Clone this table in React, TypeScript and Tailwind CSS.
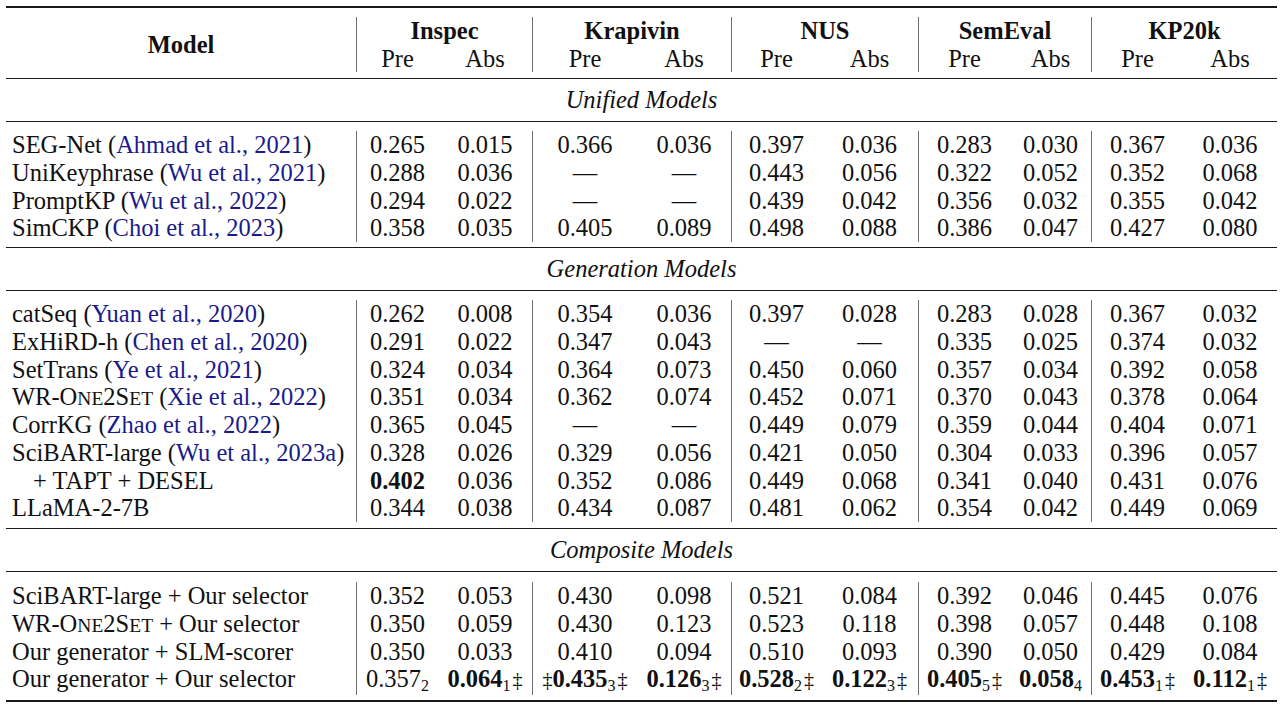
import type { ReactNode } from 'react';
import clsx from 'clsx';

type Cell = string | { v: string; b?: boolean; sub?: string; pre?: string; post?: string };

type Row = { name: ReactNode; cite?: string; indent?: boolean; vals: Cell[] };

const grid =
  'grid grid-cols-[350px_82px_94px_105px_94px_90px_97px_92px_81px_92px_94px]';

// small caps, sized like LaTeX \textsc
const One2Set = () => (
  <>
    WR-O<span className="text-[19.5px]">NE</span>2S<span className="text-[19.5px]">ET</span>
  </>
);

const unified: Row[] = [
  { name: 'SEG-Net', cite: 'Ahmad et al., 2021', vals: ['0.265', '0.015', '0.366', '0.036', '0.397', '0.036', '0.283', '0.030', '0.367', '0.036'] },
  { name: 'UniKeyphrase', cite: 'Wu et al., 2021', vals: ['0.288', '0.036', '—', '—', '0.443', '0.056', '0.322', '0.052', '0.352', '0.068'] },
  { name: 'PromptKP', cite: 'Wu et al., 2022', vals: ['0.294', '0.022', '—', '—', '0.439', '0.042', '0.356', '0.032', '0.355', '0.042'] },
  { name: 'SimCKP', cite: 'Choi et al., 2023', vals: ['0.358', '0.035', '0.405', '0.089', '0.498', '0.088', '0.386', '0.047', '0.427', '0.080'] },
];

const generation: Row[] = [
  { name: 'catSeq', cite: 'Yuan et al., 2020', vals: ['0.262', '0.008', '0.354', '0.036', '0.397', '0.028', '0.283', '0.028', '0.367', '0.032'] },
  { name: 'ExHiRD-h', cite: 'Chen et al., 2020', vals: ['0.291', '0.022', '0.347', '0.043', '—', '—', '0.335', '0.025', '0.374', '0.032'] },
  { name: 'SetTrans', cite: 'Ye et al., 2021', vals: ['0.324', '0.034', '0.364', '0.073', '0.450', '0.060', '0.357', '0.034', '0.392', '0.058'] },
  { name: <One2Set />, cite: 'Xie et al., 2022', vals: ['0.351', '0.034', '0.362', '0.074', '0.452', '0.071', '0.370', '0.043', '0.378', '0.064'] },
  { name: 'CorrKG', cite: 'Zhao et al., 2022', vals: ['0.365', '0.045', '—', '—', '0.449', '0.079', '0.359', '0.044', '0.404', '0.071'] },
  { name: 'SciBART-large', cite: 'Wu et al., 2023a', vals: ['0.328', '0.026', '0.329', '0.056', '0.421', '0.050', '0.304', '0.033', '0.396', '0.057'] },
  { name: '+ TAPT + DESEL', indent: true, vals: [{ v: '0.402', b: true }, '0.036', '0.352', '0.086', '0.449', '0.068', '0.341', '0.040', '0.431', '0.076'] },
  { name: 'LLaMA-2-7B', vals: ['0.344', '0.038', '0.434', '0.087', '0.481', '0.062', '0.354', '0.042', '0.449', '0.069'] },
];

const composite: Row[] = [
  { name: 'SciBART-large + Our selector', vals: ['0.352', '0.053', '0.430', '0.098', '0.521', '0.084', '0.392', '0.046', '0.445', '0.076'] },
  { name: <><One2Set /> + Our selector</>, vals: ['0.350', '0.059', '0.430', '0.123', '0.523', '0.118', '0.398', '0.057', '0.448', '0.108'] },
  { name: 'Our generator + SLM-scorer', vals: ['0.350', '0.033', '0.410', '0.094', '0.510', '0.093', '0.390', '0.050', '0.429', '0.084'] },
  {
    name: 'Our generator + Our selector',
    vals: [
      { v: '0.357', sub: '2' },
      { v: '0.064', b: true, sub: '1', post: '‡' },
      { v: '0.435', b: true, sub: '3', pre: '‡', post: '‡' },
      { v: '0.126', b: true, sub: '3', post: '‡' },
      { v: '0.528', b: true, sub: '2', post: '‡' },
      { v: '0.122', b: true, sub: '3', post: '‡' },
      { v: '0.405', b: true, sub: '5', post: '‡' },
      { v: '0.058', b: true, sub: '4' },
      { v: '0.453', b: true, sub: '1', post: '‡' },
      { v: '0.112', b: true, sub: '1', post: '‡' },
    ],
  },
];

function renderCell(c: Cell) {
  if (typeof c === 'string') return c;
  return (
    <>
      {c.pre && <span className="text-[20px]">{c.pre}</span>}
      <span className={clsx(c.b && 'font-bold')}>{c.v}</span>
      {c.sub && <sub className="text-[16px] font-normal">{c.sub}</sub>}
      {c.post && <span className="ml-[2px] text-[20px]">{c.post}</span>}
    </>
  );
}

function DataRow({ row }: { row: Row }) {
  return (
    <div className={grid + ' h-[27.75px] leading-[27.75px]'}>
      <div className={clsx('whitespace-nowrap', row.indent ? 'pl-[27px]' : 'pl-[6px]')}>
        {row.name}
        {row.cite && (
          <>
            {' ('}
            <span className="text-[#1a1a8c]">{row.cite}</span>
            {')'}
          </>
        )}
      </div>
      {row.vals.map((v, i) => (
        <div
          key={i}
          className={clsx('whitespace-nowrap text-center', i % 2 === 0 && 'border-l border-[#6e6e6e]')}
        >
          {renderCell(v)}
        </div>
      ))}
    </div>
  );
}

function Section({ label }: { label: string }) {
  return (
    <div className="h-[43px] border-b border-[#1a1a1a] flex items-center justify-center italic leading-[27.75px]">
      {label}
    </div>
  );
}

function Group({ rows, pad }: { rows: Row[]; pad: string }) {
  return (
    <div className={clsx('border-b border-[#1a1a1a]', pad)}>
      {rows.map((r, i) => (
        <DataRow key={i} row={r} />
      ))}
    </div>
  );
}

export default function App() {
  const datasets = ['Inspec', 'Krapivin', 'NUS', 'SemEval', 'KP20k'];
  return (
    <div className="w-[1284px] h-[706px] bg-white text-[#111] font-['Liberation_Serif','Times_New_Roman',serif] text-[24.5px]">
      <div className="ml-[6px] mt-[6px] w-[1271px] border-t-2 border-[#1a1a1a]">
        {/* Header */}
        <div className="pt-[9px] pb-[6px] border-b border-[#1a1a1a]">
          <div className={grid + ' grid-rows-[27.5px_27.5px] leading-[27.5px]'}>
            <div className="row-span-2 flex items-center justify-center font-bold">Model</div>
            {datasets.map((d) => (
              <div key={d} className="col-span-2 text-center font-bold border-l border-[#6e6e6e]">
                {d}
              </div>
            ))}
            {datasets.map((d) => (
              <div key={d + '-sub'} className="contents">
                <div className="text-center border-l border-[#6e6e6e]">Pre</div>
                <div className="text-center">Abs</div>
              </div>
            ))}
          </div>
        </div>

        <Section label="Unified Models" />
        <Group rows={unified} pad="pt-[9px] pb-[5px]" />
        <Section label="Generation Models" />
        <Group rows={generation} pad="pt-[9px] pb-[6px]" />
        <Section label="Composite Models" />
        <div className="pt-[10px] pb-[7px] border-b-2 border-[#1a1a1a]">
          {composite.map((r, i) => (
            <DataRow key={i} row={r} />
          ))}
        </div>
      </div>
    </div>
  );
}
